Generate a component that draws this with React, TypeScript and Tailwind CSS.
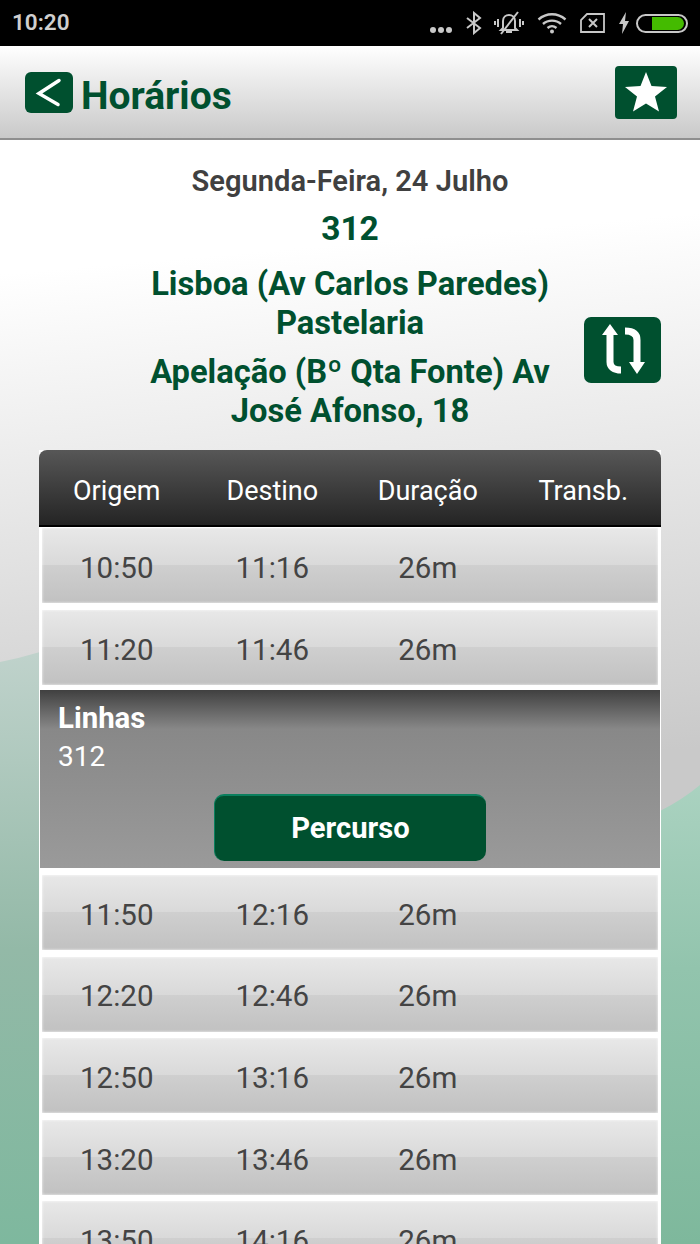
const rowsTop = [
  ['10:50', '11:16', '26m'],
  ['11:20', '11:46', '26m'],
];

const rowsBottom = [
  ['11:50', '12:16', '26m'],
  ['12:20', '12:46', '26m'],
  ['12:50', '13:16', '26m'],
  ['13:20', '13:46', '26m'],
  ['13:50', '14:16', '26m'],
];

function StatusIcons() {
  return (
    <div className="flex items-center">
      <svg width="24" height="8" viewBox="0 0 24 8" className="mt-[14px] mr-[12px]" fill="#c8c8c8">
        <circle cx="4" cy="4" r="3" />
        <circle cx="12" cy="4" r="3" />
        <circle cx="20" cy="4" r="3" />
      </svg>
      <svg width="18" height="24" viewBox="0 0 18 24" fill="none" stroke="#c8c8c8" strokeWidth="2" className="mr-[11px]">
        <path d="M2 7l13 10-6 5V2l6 5L2 17" />
      </svg>
      <svg width="30" height="24" viewBox="0 0 30 24" fill="none" stroke="#c8c8c8" strokeWidth="2" className="mr-[13px]">
        <path d="M9 17V10c0-4 3-6 6-6s6 2 6 6v7l2 2H7z" />
        <path d="M12 21h6" />
        <path d="M4 8v8M1 10v4M26 8v8M29 10v4" />
        <path d="M7 23L24 1" />
      </svg>
      <svg width="30" height="22" viewBox="0 0 30 22" fill="none" stroke="#c8c8c8" strokeWidth="2.4" className="mr-[13px]">
        <path d="M1.5 7.5c8-7 19-7 27 0" />
        <path d="M6 12c5-4.500 13-4.500 18 0" />
        <path d="M10.500 16c3-2.500 6-2.500 9 0" />
        <circle cx="15" cy="19.500" r="2" fill="#c8c8c8" stroke="none" />
      </svg>
      <svg width="25" height="22" viewBox="0 0 25 22" fill="none" stroke="#c8c8c8" strokeWidth="1.8" className="mr-[13px]">
        <path d="M7 2h17v18H1V8z" />
        <path d="M9 7l8 8M17 7l-8 8" strokeWidth="2" />
      </svg>
      <svg width="12" height="24" viewBox="0 0 12 24" fill="#c8c8c8" className="mr-[6px]">
        <path d="M8 1L1 13h4l-1 10 7-13H7z" />
      </svg>
      <div className="flex h-[19px] w-[52px] items-center justify-end rounded-full border-2 border-[#c8c8c8] pr-[2px]">
        <div className="h-[13px] w-[32px] rounded-r-full rounded-l-[2px] bg-[#44bb00]" />
      </div>
    </div>
  );
}

function TimeRow({ row }: { row: string[] }) {
  return (
    <div className="mx-[3px] h-[75px] bg-[linear-gradient(#e8e8e8,#d9d9d9_50%,#cfcfcf_50%,#c1c1c1)] shadow-[inset_0_0_3px_rgba(255,255,255,0.9)]">
      <div className="-ml-[3px] grid h-full w-[622px] grid-cols-4 items-center pt-[5px] text-center text-[29.5px] text-[#444]">
        {row.map((v, i) => (
          <span key={i}>{v}</span>
        ))}
        <span />
      </div>
    </div>
  );
}

export default function App() {
  return (
    <div className="relative h-[1244px] w-[700px] overflow-hidden bg-[linear-gradient(175deg,#fff_21%,#c9c9c9_62%)] font-['Roboto',sans-serif]">
      {/* wave shapes behind the table */}
      <svg width="700" height="1244" viewBox="0 0 700 1244" className="absolute inset-0">
        <defs>
          <linearGradient id="waveL" gradientUnits="userSpaceOnUse" x1="0" y1="655" x2="0" y2="1244">
            <stop offset="0" stopColor="#bfd2cb" />
            <stop offset="0.5" stopColor="#93b9a7" />
            <stop offset="1" stopColor="#7eb89e" />
          </linearGradient>
          <linearGradient id="waveR" gradientUnits="userSpaceOnUse" x1="0" y1="785" x2="0" y2="1244">
            <stop offset="0" stopColor="#aad2c0" />
            <stop offset="0.4" stopColor="#92c4ad" />
            <stop offset="1" stopColor="#7eb89c" />
          </linearGradient>
        </defs>
        <path d="M0 662Q20 658 40 652V1244H0z" fill="url(#waveL)" />
        <path d="M660 811Q682 800 700 785V1244H660z" fill="url(#waveR)" />
      </svg>

      <div className="relative">
        <div className="flex h-[46px] items-center justify-between bg-black pr-[12px] pl-[12px]">
          <span className="text-[22.5px] font-semibold text-[#cfcfcf]">10:20</span>
          <StatusIcons />
        </div>

        <header className="flex h-[94px] items-center justify-between border-b-2 border-[#8f8f8f] bg-[linear-gradient(#fff,#c9c9c9)] pr-[23px] pl-[25px]">
          <div className="flex items-center">
            <div className="flex h-[41px] w-[48px] items-center justify-center rounded-[6px] bg-[#00502f]">
              <svg width="28" height="32" viewBox="0 0 28 32" fill="none" stroke="#fff" strokeWidth="3.5" strokeLinecap="round">
                <path d="M24 4.500L4 17.500l19 11" />
              </svg>
            </div>
            <h1 className="mt-[8px] ml-[8px] text-[39px] font-bold text-[#00502f]">Horários</h1>
          </div>
          <div className="flex h-[53px] w-[62px] items-center justify-center rounded-[4px] bg-[#00502f]">
            <svg width="42" height="40" viewBox="0 0 42 40" fill="#fff">
              <path d="M21 0l5.500 14 15.500 1-12 9.500 4 15-13-8-13 8 4-15L0 15l15.500-1z" />
            </svg>
          </div>
        </header>

        <div className="pt-[22px] text-center font-bold">
          <div className="text-[29.1px] leading-[38px] font-semibold text-[#404040]">Segunda-Feira, 24 Julho</div>
          <div className="mt-[10px] text-[33.5px] leading-[38px] text-[#00502f]">312</div>
        </div>

        <div className="mt-[17px] flex items-center pl-[140px]">
          <div className="w-[420px] text-center text-[32.7px] leading-[39px] font-bold text-[#00502f]">
            <div>
              Lisboa (Av Carlos Paredes)
              <br />
              Pastelaria
            </div>
            <div className="mt-[10px]">
              Apelação (Bº Qta Fonte) Av
              <br />
              José Afonso, 18
            </div>
          </div>
          <div className="mt-[4px] ml-[24px] flex h-[66px] w-[77px] items-center justify-center rounded-[7px] bg-[#00502f]">
            <svg width="44" height="56" viewBox="0 0 44 56" fill="none" stroke="#fff" strokeWidth="7">
              <path d="M9 12v28c0 5 4 8 11 8" />
              <path d="M24 9c8 0 12 3 12 9v24" />
              <path d="M9 2l8 11H1zM36 52l8-12H28z" fill="#fff" stroke="none" />
            </svg>
          </div>
        </div>

        <div className="mx-[39px] mt-[19px] w-[622px] bg-white">
          <div className="grid h-[77px] grid-cols-4 items-center rounded-t-[8px] border-b-2 border-black bg-[linear-gradient(#575757,#242424)] pt-[8px] text-center text-[27px] text-white">
            <span>Origem</span>
            <span>Destino</span>
            <span>Duração</span>
            <span>Transb.</span>
          </div>
          <div className="flex flex-col gap-[7px] pt-[1px]">
            {rowsTop.map((row, i) => (
              <TimeRow key={i} row={row} />
            ))}
          </div>
          <div className="mx-[1px] mt-[5px] mb-[7px] h-[178px] bg-[linear-gradient(#404040,#888_22%,#9a9a9a)] pt-[11px]">
            <div className="pl-[18px] text-[29.4px] leading-[34px] font-bold text-white">Linhas</div>
            <div className="mt-[5px] pl-[18px] text-[28px] leading-[34px] text-white">312</div>
            <div className="mx-auto mt-[20px] flex h-[67px] w-[272px] items-center justify-center rounded-[10px] border-t-2 border-l border-[#0b7f5e] bg-[#00502f] text-[29.2px] font-bold text-white">
              Percurso
            </div>
          </div>
          <div className="flex flex-col gap-[6.6px]">
            {rowsBottom.map((row, i) => (
              <TimeRow key={i} row={row} />
            ))}
          </div>
        </div>
      </div>
    </div>
  );
}
